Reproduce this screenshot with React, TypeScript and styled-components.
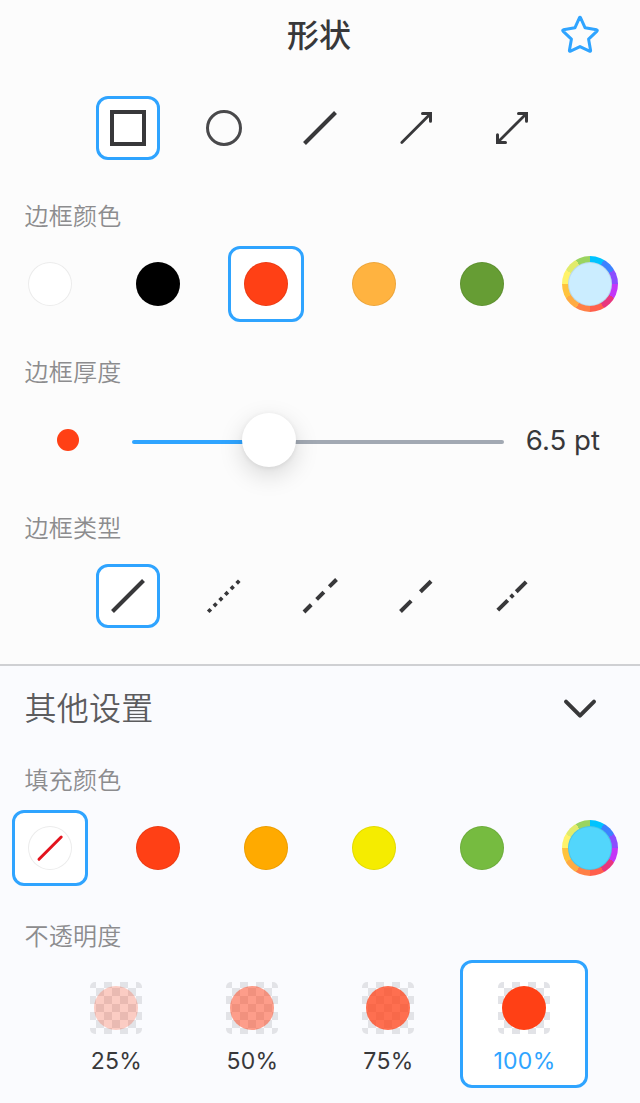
import React from "react";
import styled, { createGlobalStyle } from "styled-components";

const BLUE = "#2fa4ff";
const INK = "#38383a";

const GlobalStyle = createGlobalStyle`
  *, *::before, *::after { box-sizing: border-box; }
  body {
    margin: 0;
    background: #fafbfe;
    font-family: Inter, "Noto Sans CJK SC", sans-serif;
    color: ${INK};
  }
  button { font: inherit; color: inherit; cursor: pointer; }
  svg { display: block; }
`;

const Panel = styled.main`
  width: 640px;
  height: 1103px;
  display: flex;
  flex-direction: column;
  overflow: hidden;
`;

const Section = styled.section<{ $secondary?: boolean }>`
  background: ${(p) => (p.$secondary ? "#fafbfe" : "#fcfcfc")};
  height: ${(p) => (p.$secondary ? "437px" : "666px")};
  border-bottom: ${(p) => (p.$secondary ? "none" : "2px solid #cfd0d3")};
  flex: none;
`;

const Header = styled.header`
  display: grid;
  grid-template-columns: 1fr auto 1fr;
  align-items: center;
  height: 70px;
  margin-bottom: 26px;
  padding-right: 40px;
`;

const Title = styled.h1`
  grid-column: 2;
  margin: 1px -38px 0 0;
  font-size: 32px;
  line-height: 48px;
  font-weight: 500;
`;

const IconButton = styled.button`
  display: block;
  width: 40px;
  height: 40px;
  padding: 0;
  border: 0;
  background: none;
  justify-self: end;
`;

const ToolRow = styled.div`
  display: flex;
  justify-content: center;
  gap: 32px;
  height: 64px;
`;

const SwatchRow = styled.div`
  display: flex;
  justify-content: space-between;
  padding: 0 12px;
  height: 76px;
`;

const Tile = styled.button<{ $size: number; $active?: boolean }>`
  width: ${(p) => p.$size}px;
  height: ${(p) => p.$size}px;
  display: flex;
  flex-direction: column;
  align-items: center;
  justify-content: center;
  padding: 0;
  border: 3px solid ${(p) => (p.$active ? BLUE : "transparent")};
  border-radius: 12px;
  background: ${(p) => (p.$active ? "#fff" : "transparent")};
`;

const Label = styled.h2<{ $top: number; $bottom?: number }>`
  margin: ${(p) => p.$top}px 0 ${(p) => p.$bottom ?? 11}px;
  padding-left: 24.4px;
  height: 36px;
  font-size: 24px;
  line-height: 36px;
  font-weight: 350;
  letter-spacing: 0.3px;
  color: #8c8c8e;
`;

const Swatch = styled.span<{ $color: string }>`
  display: flex;
  align-items: center;
  justify-content: center;
  width: 44px;
  height: 44px;
  border-radius: 50%;
  background: ${(p) => p.$color};
  box-shadow: inset 0 0 0 1px rgba(0, 0, 0, 0.08);
`;

const Wheel = styled.span`
  display: flex;
  align-items: center;
  justify-content: center;
  flex: none;
  width: 56px;
  height: 56px;
  border-radius: 50%;
  background: conic-gradient(
    #00c3ff 0 30deg, #3c82ff 0 60deg, #8a4dff 0 90deg, #c336f7 0 120deg,
    #e8367e 0 150deg, #ff5f4c 0 180deg, #ff8046 0 210deg, #ffab42 0 240deg,
    #ffc33d 0 270deg, #fff36a 0 300deg, #e1eb6b 0 330deg, #9ad45f 0
  );
`;

const SliderRow = styled.div`
  display: flex;
  align-items: center;
  height: 64px;
  padding: 0 40px 0 57px;
`;

const Dot = styled.span`
  width: 22px;
  height: 22px;
  margin-right: 53px;
  border-radius: 50%;
  background: #ff4015;
`;

const Slider = styled.div`
  display: flex;
  align-items: center;
  width: 372px;
`;

const Track = styled.span<{ $filled?: boolean }>`
  height: 4px;
  margin-top: 4px;
  border-radius: ${(p) => (p.$filled ? "2px 0 0 2px" : "0 2px 2px 0")};
  background: ${(p) => (p.$filled ? BLUE : "#a2a9b3")};
  ${(p) => (p.$filled ? "width: 112px;" : "flex: 1;")}
`;

const Knob = styled.span`
  position: relative;
  width: 54px;
  height: 54px;
  margin: 0 -2px;
  border-radius: 50%;
  background: #fff;
  box-shadow: 0 8px 24px rgba(0, 0, 0, 0.15), 0 1px 5px rgba(0, 0, 0, 0.07);
`;

const Value = styled.output`
  margin-left: auto;
  font-size: 27.6px;
  line-height: 36px;
  font-weight: 380;
  white-space: nowrap;
`;

const MoreHeader = styled.div`
  display: flex;
  justify-content: space-between;
  align-items: center;
  height: 84px;
  padding: 0 40px 0 24.4px;
`;

const MoreTitle = styled.h2`
  margin: 2px 0 0;
  font-size: 32px;
  line-height: 48px;
  font-weight: 350;
  letter-spacing: 0.3px;
  color: #5c5c5e;
`;

const OpacityRow = styled.div`
  display: flex;
  gap: 8px;
  padding-left: 52px;
`;

const Checker = styled.span`
  display: flex;
  align-items: center;
  justify-content: center;
  width: 52px;
  height: 52px;
  margin-top: 10px;
  border-radius: 5px;
  background: repeating-conic-gradient(#e2e3e7 0 25%, transparent 0 50%) 6px -2px / 16px 16px;
`;

const Ink = styled.span<{ $alpha: number }>`
  width: 44px;
  height: 44px;
  border-radius: 50%;
  background: rgba(255, 64, 21, ${(p) => p.$alpha});
`;

const Percent = styled.span<{ $active?: boolean }>`
  margin-top: 12px;
  padding-left: 1px;
  font-size: 23px;
  line-height: 30px;
  font-weight: 380;
  letter-spacing: 0.3px;
  color: ${(p) => (p.$active ? BLUE : INK)};
`;

const StarIcon = () => (
  <svg width="40" height="40" viewBox="0 0 40 40" fill="none" stroke={BLUE} strokeWidth="3" strokeLinejoin="round">
    <path d="M19.4 2.8 Q20 1.8 20.6 2.8 L25.1 12.8 L36.6 14.8 Q37.8 15.2 37 16.1 L28.6 24.2 L30.6 35.4 Q30.6 36.6 29.5 36.1 L20 31.6 L10.5 36.1 Q9.4 36.6 9.4 35.4 L11.4 24.2 L3 16.1 Q2.2 15.2 3.4 14.8 L14.9 12.8 Z" />
  </svg>
);

const Glyph = ({ children }: { children: React.ReactNode }) => (
  <svg width="48" height="48" viewBox="0 0 48 48" fill="none" stroke={INK} overflow="visible">
    {children}
  </svg>
);

const shapes: { id: string; icon: React.ReactNode }[] = [
  { id: "矩形", icon: <rect x="8" y="8" width="32" height="32" strokeWidth="4" /> },
  { id: "椭圆", icon: <circle cx="24" cy="24" r="16.5" strokeWidth="3" stroke="#49494b" /> },
  { id: "直线", icon: <path d="M8.5 39.5 L39.5 8.5" strokeWidth="4" /> },
  {
    id: "箭头",
    icon: (
      <g strokeWidth="3" strokeLinecap="round">
        <path d="M9.8 38.4 L38.5 9.7" strokeWidth="2.8" />
        <path d="M30.5 9.5 H38.5 V17.3" />
      </g>
    ),
  },
  {
    id: "双箭头",
    icon: (
      <g strokeWidth="3" strokeLinecap="round">
        <path d="M9.5 38.5 L38.5 9.5" strokeWidth="2.8" />
        <path d="M30.5 9.5 H38.5 V17.3 M9.5 30.7 V38.5 H17.5" />
      </g>
    ),
  },
];

const lineStyles: { id: string; path: string; width: number; dash?: string }[] = [
  { id: "实线", path: "M8.5 39.5 L39.5 8.5", width: 4 },
  { id: "点线", path: "M8.2 39.8 L40.4 7.6", width: 3.7, dash: "3.7 4.35" },
  { id: "短虚线", path: "M8 40 L40.6 7.4", width: 4, dash: "10.2 7.7" },
  { id: "长虚线", path: "M8.5 39.5 L40.2 8.1", width: 4, dash: "15 13" },
  { id: "点划线", path: "M9.8 38.2 L38.8 9.2", width: 4, dash: "14 4.2 3.7 4.2" },
];

const borderColors = ["#ffffff", "#000000", "#ff4015", "#ffb340", "#669d34"];
const fillColors = ["#ff4015", "#ffaa00", "#f5ec00", "#76bb40"];
const opacities = [25, 50, 75, 100];

export default function App() {
  return (
    <>
      <GlobalStyle />
      <Panel>
        <Section>
          <Header>
            <Title>形状</Title>
            <IconButton aria-label="收藏">
              <StarIcon />
            </IconButton>
          </Header>
          <ToolRow>
            {shapes.map((s, i) => (
              <Tile key={s.id} $size={64} $active={i === 0} aria-label={s.id}>
                <Glyph>{s.icon}</Glyph>
              </Tile>
            ))}
          </ToolRow>

          <Label $top={39}>边框颜色</Label>
          <SwatchRow>
            {borderColors.map((c, i) => (
              <Tile key={c} $size={76} $active={i === 2} aria-label={c}>
                <Swatch $color={c} />
              </Tile>
            ))}
            <Tile $size={76} aria-label="自定义颜色">
              <Wheel>
                <Swatch $color="#cbedff" />
              </Wheel>
            </Tile>
          </SwatchRow>

          <Label $top={33} $bottom={17}>边框厚度</Label>
          <SliderRow>
            <Dot />
            <Slider>
              <Track $filled />
              <Knob />
              <Track />
            </Slider>
            <Value>6.5 pt</Value>
          </SliderRow>

          <Label $top={39} $bottom={17}>边框类型</Label>
          <ToolRow>
            {lineStyles.map((l, i) => (
              <Tile key={l.id} $size={64} $active={i === 0} aria-label={l.id}>
                <Glyph>
                  <path d={l.path} strokeWidth={l.width} strokeDasharray={l.dash} />
                </Glyph>
              </Tile>
            ))}
          </ToolRow>
        </Section>

        <Section $secondary>
          <MoreHeader>
            <MoreTitle>其他设置</MoreTitle>
            <IconButton aria-label="收起">
              <svg width="40" height="40" viewBox="0 0 40 40" fill="none" stroke={INK} strokeWidth="4" strokeLinecap="round" strokeLinejoin="round">
                <path d="M6 13.6 L20 27.6 L34 13.6" />
              </svg>
            </IconButton>
          </MoreHeader>

          <Label $top={13}>填充颜色</Label>
          <SwatchRow>
            <Tile $size={76} $active aria-label="无填充">
              <Swatch $color="#ffffff">
                <svg width="44" height="44" viewBox="0 0 44 44" fill="none" stroke="#e3131d" strokeWidth="3" strokeLinecap="round">
                  <path d="M11 33.3 L33.2 11" />
                </svg>
              </Swatch>
            </Tile>
            {fillColors.map((c) => (
              <Tile key={c} $size={76} aria-label={c}>
                <Swatch $color={c} />
              </Tile>
            ))}
            <Tile $size={76} aria-label="自定义颜色">
              <Wheel>
                <Swatch $color="#52d6fc" />
              </Wheel>
            </Tile>
          </SwatchRow>

          <Label $top={33} $bottom={5}>不透明度</Label>
          <OpacityRow>
            {opacities.map((o) => (
              <Tile key={o} $size={128} $active={o === 100}>
                <Checker>
                  <Ink $alpha={o / 100} />
                </Checker>
                <Percent $active={o === 100}>{o}%</Percent>
              </Tile>
            ))}
          </OpacityRow>
        </Section>
      </Panel>
    </>
  );
}
